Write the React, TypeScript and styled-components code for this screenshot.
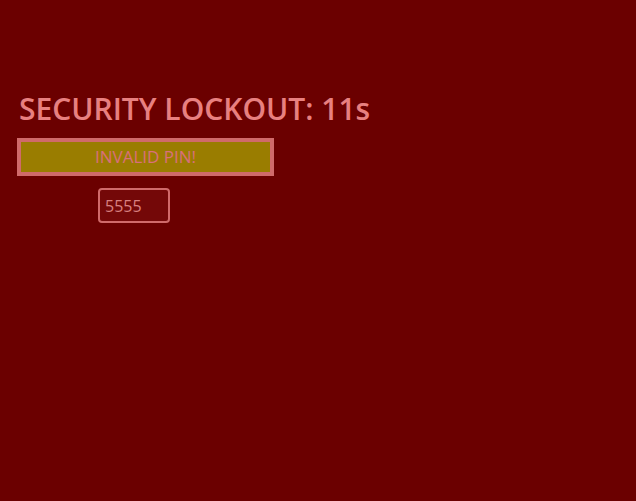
import React, { useState } from "react";
import styled, { createGlobalStyle } from "styled-components";

const GlobalStyle = createGlobalStyle`
  html, body {
    margin: 0;
    padding: 0;
    background: #6b0000;
    font-family: "Open Sans", "Liberation Sans", sans-serif;
  }
`;

const Screen = styled.div`
  min-height: 501px;
  padding: 90px 17px 0;
  box-sizing: border-box;
  display: flex;
  flex-direction: column;
  align-items: flex-start;
`;

const Title = styled.h1`
  margin: 0 0 0 2px;
  font-size: 30px;
  font-weight: 600;
  line-height: 38px;
  color: #e88080;
`;

const AlertButton = styled.button`
  margin-top: 10px;
  width: 257px;
  height: 38px;
  padding: 0 0 2px;
  background: #9a7d00;
  border: 4px solid #d06a6a;
  color: #d8707a;
  font-family: inherit;
  font-size: 17px;
  font-weight: 400;
  cursor: pointer;
`;

const PinInput = styled.input`
  margin: 12px 0 0 81px;
  width: 72px;
  height: 35px;
  box-sizing: border-box;
  padding: 0 5px;
  background: #740808;
  border: 2px solid #d06a6a;
  border-radius: 4px;
  color: #d88080;
  font-family: inherit;
  font-size: 16px;
  outline: none;
`;

export default function App() {
  const [pin, setPin] = useState("5555");
  const seconds = 11;

  return (
    <>
      <GlobalStyle />
      <Screen>
        <Title>SECURITY LOCKOUT: {seconds}s</Title>
        <AlertButton>INVALID PIN!</AlertButton>
        <PinInput value={pin} onChange={(e) => setPin(e.target.value)} />
      </Screen>
    </>
  );
}
